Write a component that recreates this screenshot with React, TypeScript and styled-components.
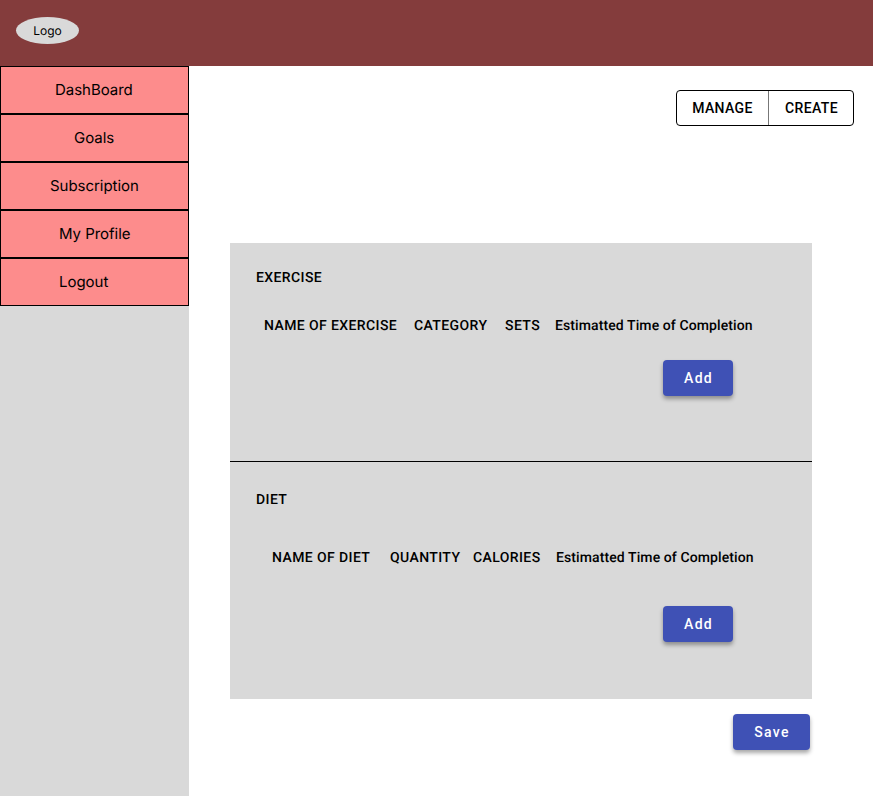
import React from "react";
import styled, { createGlobalStyle } from "styled-components";

const GlobalStyle = createGlobalStyle`
  *, *::before, *::after { box-sizing: border-box; }
  html, body { margin: 0; padding: 0; background: #fff; }
  button { font: inherit; color: inherit; margin: 0; border: 0; background: none; padding: 0; }
`;

const Page = styled.div`
  width: 100%;
  height: 796px;
  display: flex;
  flex-direction: column;
  overflow: hidden;
  color: #000;
  font-family: Roboto, sans-serif;
  text-rendering: geometricPrecision;
`;

const Header = styled.header`
  flex: 0 0 66px;
  padding: 17px 16px;
  background: #843c3c;
`;

const Logo = styled.div`
  width: 63px;
  height: 27px;
  border-radius: 50%;
  background: #d9d9d9;
  font: 400 12px/27px Inter, sans-serif;
  text-align: center;
`;

const Body = styled.div`
  flex: 1;
  display: flex;
`;

const Sidebar = styled.nav`
  flex: 0 0 189px;
  background: #d9d9d9;
`;

const NavItem = styled.a<{ $indent: number }>`
  display: block;
  height: 48px;
  padding-left: ${(p) => p.$indent}px;
  border: 1px solid #000;
  background: #fd8c8c;
  font: 400 15px/46px Inter, sans-serif;
  letter-spacing: -0.03px;
  white-space: nowrap;
`;

const Main = styled.main`
  flex: 1;
  display: flex;
  flex-direction: column;
  align-items: flex-start;
  padding: 24px 19px 0 41px;
`;

const ButtonGroup = styled.div`
  align-self: flex-end;
  display: flex;
  width: 178px;
  height: 36px;
  border: 1px solid #000;
  border-radius: 4px;
`;

const GroupButton = styled.button<{ $width: number }>`
  width: ${(p) => p.$width}px;
  font-weight: 500;
  font-size: 14px;
  letter-spacing: 0.4px;
  & + & {
    padding-left: 1px;
    border-left: 1px solid #777;
  }
`;

const Panel = styled.div`
  width: 582px;
  margin-top: 117px;
  background: #d9d9d9;
`;

const Section = styled.section<{ $height: number; $top: number }>`
  height: ${(p) => p.$height}px;
  padding: ${(p) => p.$top}px 26px 0;
  display: flex;
  flex-direction: column;
  & + & { border-top: 1px solid #000; }
`;

const Title = styled.h2`
  margin: 0;
  font-weight: 500;
  font-size: 14px;
  line-height: 20px;
  letter-spacing: 0.4px;
`;

const Columns = styled.div<{ $top: number; $indent: number; $tracks: string }>`
  display: grid;
  grid-template-columns: ${(p) => p.$tracks};
  margin: ${(p) => p.$top}px 0 0 ${(p) => p.$indent}px;
`;

const Column = styled.span<{ $spacing?: number }>`
  font-weight: 500;
  font-size: 14px;
  line-height: 20px;
  letter-spacing: ${(p) => p.$spacing ?? 0.4}px;
  white-space: nowrap;
`;

const ActionButton = styled.button<{ $width: number; $margin: string }>`
  align-self: flex-end;
  width: ${(p) => p.$width}px;
  height: 36px;
  margin: ${(p) => p.$margin};
  padding-left: 1px;
  border-radius: 4px;
  background: #3f51b5;
  color: #fff;
  font-weight: 500;
  font-size: 14px;
  letter-spacing: 1.25px;
  box-shadow: 0 3px 4px rgba(0, 0, 0, 0.35);
`;

const NAV = [
  { label: "DashBoard", indent: 54 },
  { label: "Goals", indent: 73 },
  { label: "Subscription", indent: 49 },
  { label: "My Profile", indent: 58 },
  { label: "Logout", indent: 58 },
];

export default function App() {
  return (
    <Page>
      <GlobalStyle />
      <Header><Logo>Logo</Logo></Header>
      <Body>
        <Sidebar>
          {NAV.map((n) => <NavItem key={n.label} $indent={n.indent}>{n.label}</NavItem>)}
        </Sidebar>
        <Main>
          <ButtonGroup>
            <GroupButton $width={91}>MANAGE</GroupButton>
            <GroupButton $width={85}>CREATE</GroupButton>
          </ButtonGroup>
          <Panel>
            <Section $height={218} $top={25}>
              <Title>EXERCISE</Title>
              <Columns $top={28} $indent={8} $tracks="150px 91px 50px auto">
                <Column>NAME OF EXERCISE</Column>
                <Column>CATEGORY</Column>
                <Column>SETS</Column>
                <Column $spacing={0.1}>Estimatted Time of Completion</Column>
              </Columns>
              <ActionButton $width={70} $margin="24px 53px 0 0">Add</ActionButton>
            </Section>
            <Section $height={238} $top={28}>
              <Title>DIET</Title>
              <Columns $top={38} $indent={16} $tracks="118px 83px 83px auto">
                <Column>NAME OF DIET</Column>
                <Column>QUANTITY</Column>
                <Column>CALORIES</Column>
                <Column $spacing={0.1}>Estimatted Time of Completion</Column>
              </Columns>
              <ActionButton $width={70} $margin="38px 53px 0 0">Add</ActionButton>
            </Section>
          </Panel>
          <ActionButton $width={77} $margin="15px 44px 0 0">Save</ActionButton>
        </Main>
      </Body>
    </Page>
  );
}
